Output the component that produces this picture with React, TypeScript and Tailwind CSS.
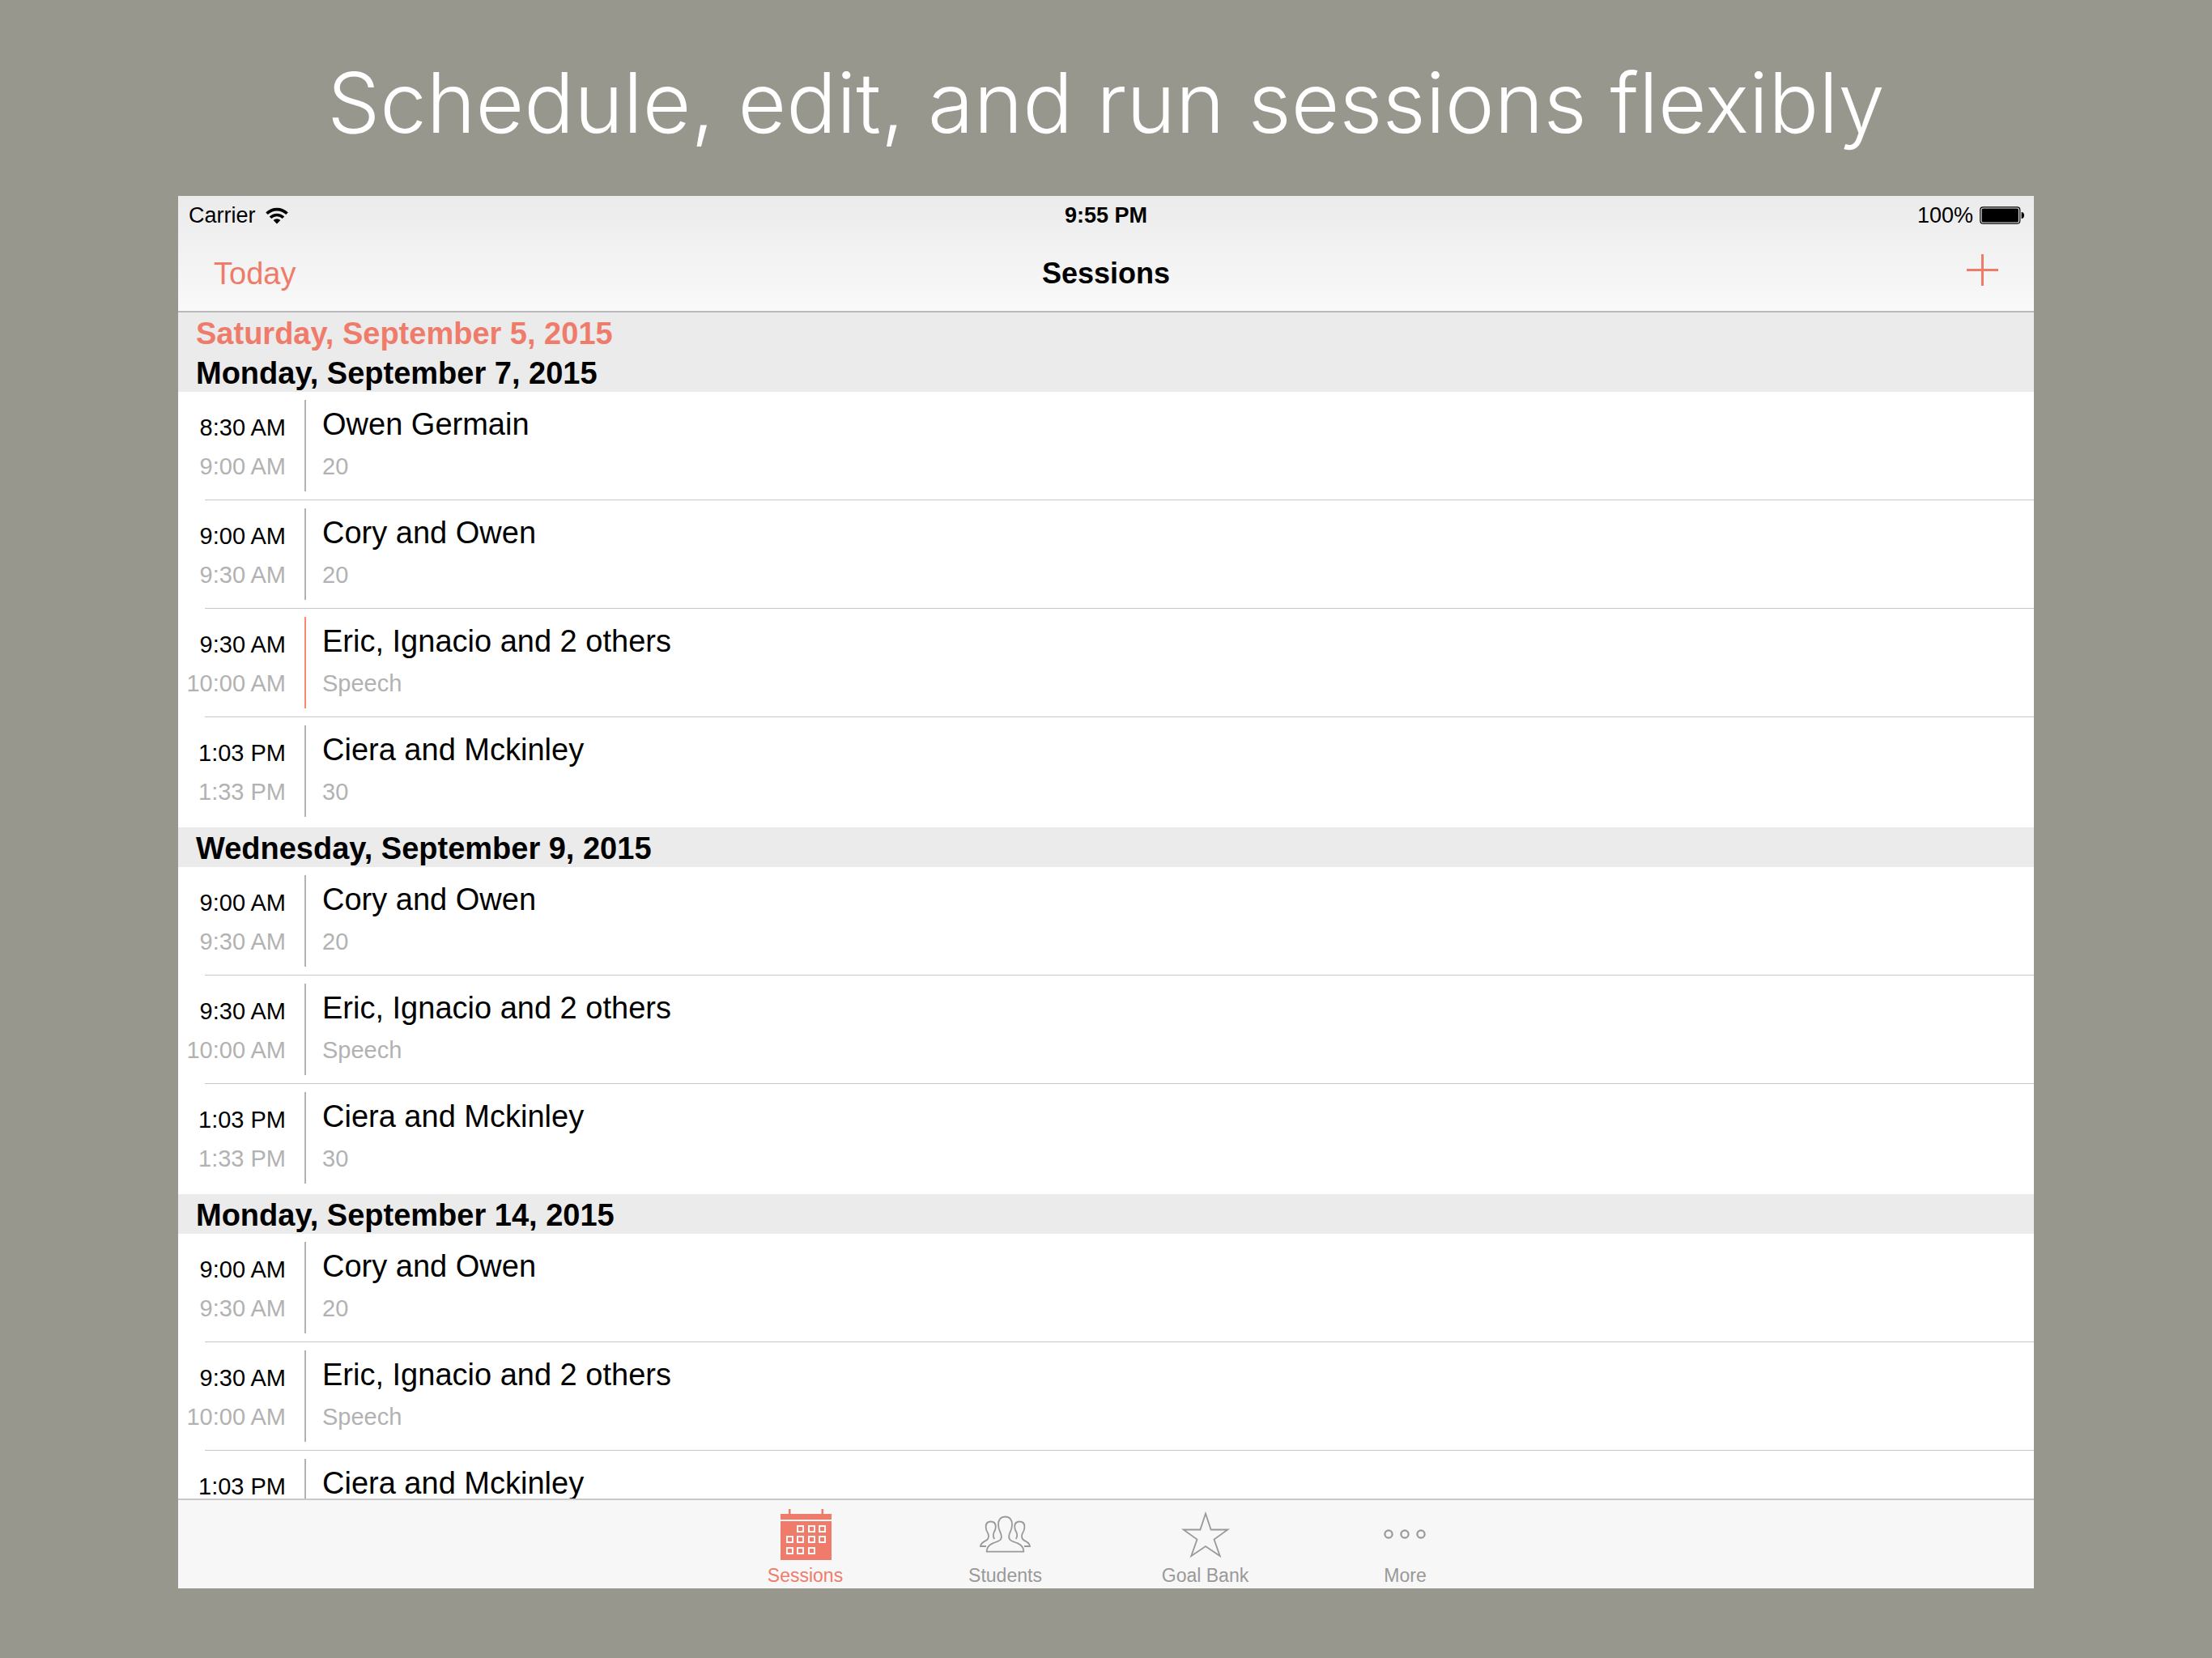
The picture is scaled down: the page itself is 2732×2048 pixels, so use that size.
import React from "react";

interface Session {
  start: string;
  end: string;
  name: string;
  note: string;
  active?: boolean;
}

interface Day {
  date: string;
  today?: boolean;
  sessions: Session[];
}

const owen: Session = { start: "8:30 AM", end: "9:00 AM", name: "Owen Germain", note: "20" };
const cory: Session = { start: "9:00 AM", end: "9:30 AM", name: "Cory and Owen", note: "20" };
const eric: Session = {
  start: "9:30 AM",
  end: "10:00 AM",
  name: "Eric, Ignacio and 2 others",
  note: "Speech",
};
const ciera: Session = { start: "1:03 PM", end: "1:33 PM", name: "Ciera and Mckinley", note: "30" };

const days: Day[] = [
  { date: "Saturday, September 5, 2015", today: true, sessions: [] },
  { date: "Monday, September 7, 2015", sessions: [owen, cory, { ...eric, active: true }, ciera] },
  { date: "Wednesday, September 9, 2015", sessions: [cory, eric, ciera] },
  { date: "Monday, September 14, 2015", sessions: [cory, eric, ciera] },
];

const WifiIcon = () => (
  <svg width="28" height="21" viewBox="0 0 28 21" fill="none" stroke="black" strokeWidth="3.6">
    <path d="M1.5 7.8a17.6 17.6 0 0 1 25 0" />
    <path d="M6 12.8a11.4 11.4 0 0 1 16 0" />
    <path d="M14 20.6l-4.4-4.6a6.2 6.2 0 0 1 8.8 0z" fill="black" stroke="none" />
  </svg>
);

const BatteryIcon = () => (
  <svg width="56" height="22" viewBox="0 0 56 22">
    <rect x="0.8" y="0.8" width="49" height="20.4" rx="3.5" fill="none" stroke="black" strokeWidth="1.2" />
    <rect x="2.6" y="2.6" width="45.4" height="16.8" rx="1.5" />
    <path d="M51.6 7c2.2 0 3.4 1.6 3.4 4s-1.2 4-3.4 4z" />
  </svg>
);

const CalendarIcon = () => {
  const cells = [
    [20, 21], [34, 21], [47, 21],
    [7, 34], [20, 34], [34, 34], [47, 34],
    [7, 48], [20, 48], [34, 48],
  ];
  return (
    <svg width="64" height="64" viewBox="-1 0 64 64" fill="currentColor">
      <path d="M10 1h2.5v6h38V1h2.5v6h10v7H0V7h10z" />
      <path d="M0 16h63v48H0z" />
      {cells.map(([x, y]) => (
        <rect key={`${x}-${y}`} x={x + 1} y={y + 1} width="7" height="7" stroke="#f7f7f7" strokeWidth="2" />
      ))}
    </svg>
  );
};

const StudentsIcon = () => {
  const side =
    "M18.3 38c-1.4-2-2-5-.8-8 1.5-2.5 2.3-4.5 2.3-7 0-4.3-2.2-6.5-6.1-6.5s-6.100 2.200-6.100 6.500c0 3.500.9 5.500 2.300 7.500 1.300 2.300 1.300 5.500.1 7.500C8.500 41 1.500 41 1 47h7";
  return (
    <svg width="64" height="64" viewBox="0 0 64 64" fill="none" stroke="currentColor" strokeWidth="1.8">
      <path d="M31.5 10.5c-5.8 0-8.5 3.8-8.5 10 0 5 1.500 7.500 3 10.500 1 2.500 1 6-.5 8-1.800 2-6 2.800-9.500 4.300-5 2.100-7.300 5-7.300 10.300h45.600c0-5.300-2.300-8.200-7.300-10.300-3.500-1.500-7.700-2.300-9.500-4.300-1.500-2-1.500-5.500-.5-8 1.500-3 3-5.500 3-10.500 0-6.200-2.700-10-8.500-10z" />
      <path d={side} />
      <path d={side} transform="translate(63 0) scale(-1 1)" />
    </svg>
  );
};

const StarIcon = () => (
  <svg width="64" height="64" viewBox="0 0 64 64" fill="none" stroke="currentColor" strokeWidth="1.8">
    <path d="M32 6.500l6.600 20h20.700L42.500 38.500 49.700 59 32 47 14.300 59 21.500 38.500 4.700 26.500h20.700z" />
  </svg>
);

const MoreIcon = () => (
  <svg width="64" height="64" viewBox="0 0 64 64" fill="none" stroke="currentColor" strokeWidth="2.2">
    <circle cx="11" cy="32" r="4.6" />
    <circle cx="31" cy="32" r="4.6" />
    <circle cx="51" cy="32" r="4.6" />
  </svg>
);

const tabs = [
  { label: "Sessions", icon: <CalendarIcon />, active: true },
  { label: "Students", icon: <StudentsIcon /> },
  { label: "Goal Bank", icon: <StarIcon /> },
  { label: "More", icon: <MoreIcon /> },
];

const SessionRow: React.FC<{ session: Session; last: boolean }> = ({ session, last }) => {
  return (
    <li className="flex h-[134px]">
      <div className="w-[33px] shrink-0" />
      <div className={`flex flex-1 ${last ? "" : "border-b border-[#c8c7cc]"}`}>
        <div className="-ml-[33px] flex w-[133px] shrink-0 flex-col pt-5 text-right text-[29px] leading-[48px] whitespace-nowrap">
          <time className="text-black">{session.start}</time>
          <time className="text-[#b2b2b2]">{session.end}</time>
        </div>
        <div
          className={`mt-[10px] ml-[23px] h-[113px] w-[2px] shrink-0 ${session.active ? "bg-[#f58a6c]" : "bg-[#b2b2b2]"}`}
        />
        <div className="ml-5 flex flex-col gap-1 pt-4">
          <h3 className="text-[38px] leading-[48px] text-black">{session.name}</h3>
          <p className="text-[29px] leading-[48px] text-[#b2b2b2]">{session.note}</p>
        </div>
      </div>
    </li>
  );
};

const App: React.FC = () => {
  return (
    <div className="flex h-screen flex-col bg-[#97978d] px-[220px] pb-[86px] font-['Liberation_Sans',Arial,sans-serif]">
      <h1 className="flex h-[242px] shrink-0 items-center justify-center pt-3 font-['Inter',sans-serif] text-[103px] font-light whitespace-nowrap text-white">
        Schedule, edit, and run sessions flexibly
      </h1>
      <div className="flex min-h-0 flex-1 flex-col bg-white">
        <header className="h-36 shrink-0 border-b-2 border-[#b9b9bb] bg-linear-to-b from-[#ebebeb] to-[#f9f9f9]">
          <div className="grid h-12 grid-cols-3 items-center px-[13px] text-[27px]">
            <div className="flex items-center gap-3">
              <span>Carrier</span>
              <WifiIcon />
            </div>
            <span className="text-center font-bold">9:55 PM</span>
            <div className="-mr-0.5 flex items-center justify-end gap-2">
              <span>100%</span>
              <BatteryIcon />
            </div>
          </div>
          <div className="grid h-24 grid-cols-3 items-center px-[44px]">
            <button className="justify-self-start text-[38px] text-[#ef7c6b]">Today</button>
            <h2 className="text-center text-[36px] font-bold">Sessions</h2>
            <button aria-label="Add session" className="self-start justify-self-end pt-6 text-[#ef7c6b]">
              <svg width="40" height="40" viewBox="0 0 40 40" stroke="currentColor" strokeWidth="3">
                <path d="M20.5 0v39M1 19.5h39" />
              </svg>
            </button>
          </div>
        </header>

        <main className="min-h-0 flex-1 overflow-hidden">
          {days.map((day) => (
            <section key={day.date}>
              <h2
                className={`h-[49px] bg-[#ebebeb] px-[22px] pt-0.5 text-[38px] leading-[49px] font-bold ${day.today ? "text-[#ef7c6b]" : "text-black"}`}
              >
                {day.date}
              </h2>
              {day.sessions.length > 0 && (
                <ul className="pb-0.5">
                  {day.sessions.map((session, i) => (
                    <SessionRow key={session.start} session={session} last={i === day.sessions.length - 1} />
                  ))}
                </ul>
              )}
            </section>
          ))}
        </main>

        <nav className="flex h-[111px] shrink-0 justify-center border-t-2 border-[#c8c8c8] bg-[#f7f7f7] pr-0.5">
          {tabs.map((tab) => (
            <button
              key={tab.label}
              className={`flex w-[247px] flex-col items-center pt-[10px] ${tab.active ? "text-[#ef7c6b]" : "text-[#999999]"}`}
            >
              {tab.icon}
              <span className="mt-1.5 text-[23px] leading-[26px]">{tab.label}</span>
            </button>
          ))}
        </nav>
      </div>
    </div>
  );
};

export default App;
